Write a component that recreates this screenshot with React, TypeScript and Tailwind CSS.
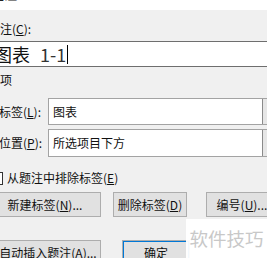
import React from "react";

const font = { fontFamily: '"Noto Sans CJK SC", "Noto Sans", sans-serif' };

function Btn({ children, cls }: { children: React.ReactNode; cls: string }) {
  return (
    <div
      className={`flex shrink-0 items-center justify-center border border-[#adadad] bg-[#e1e1e1] text-[12px] leading-[16px] text-[#111] whitespace-nowrap ${cls}`}
    >
      {children}
    </div>
  );
}

export default function App() {
  return (
    <div
      style={font}
      className="relative flex h-[258px] w-[267px] flex-col overflow-hidden bg-[#f0f0f0] text-[#111]"
    >
      {/* title strip */}
      <div className="h-[10px] shrink-0 overflow-hidden bg-white">
        <div className="-ml-[9px] -mt-[14px] text-[13px] font-bold leading-[16px] text-[#222]">
          题注
        </div>
      </div>

      {/* caption label */}
      <div className="mt-[11px] -ml-[12px] text-[12px] leading-[16px] whitespace-nowrap">
        题注(<span className="underline">C</span>):
      </div>

      {/* caption input */}
      <div className="mt-[4px] -ml-[10px] flex h-[26px] w-[290px] shrink-0 items-center border border-[#6e6e6e] bg-white pl-[4px]">
        <span className="-ml-[1px] text-[18px] leading-[22px] text-[#111]">图表</span>
        <span className="ml-[10px] text-[18px] leading-[22px] text-[#333]">1-1</span>
        <span className="ml-[1px] h-[19px] w-[1px] bg-black" />
      </div>

      {/* options label */}
      <div className="mt-[5px] -ml-[12px] text-[12px] leading-[16px] whitespace-nowrap">
        选项
      </div>

      {/* label select */}
      <div className="mt-[10px] flex h-[27px] shrink-0 items-center">
        <div className="w-[48px] shrink-0 -ml-[1px] text-[12px] leading-[16px] whitespace-nowrap">
          标签(<span className="underline">L</span>):
        </div>
        <div className="ml-[1px] flex h-full w-[240px] shrink-0 border border-[#a3a3a3]">
          <div className="flex w-[213px] items-center bg-white pl-[4px] text-[12px] leading-[16px]">
            图表
          </div>
          <div className="flex-1 border-l border-[#8a8a8a] bg-[#e6e6e6]" />
        </div>
      </div>

      {/* position select */}
      <div className="mt-[4px] flex h-[28px] shrink-0 items-center">
        <div className="w-[48px] shrink-0 -ml-[1px] text-[12px] leading-[16px] whitespace-nowrap">
          位置(<span className="underline">P</span>):
        </div>
        <div className="ml-[1px] flex h-full w-[240px] shrink-0 border border-[#a3a3a3]">
          <div className="flex w-[213px] items-center bg-white pl-[4px] text-[12px] leading-[16px]">
            所选项目下方
          </div>
          <div className="flex-1 border-l border-[#8a8a8a] bg-[#e6e6e6]" />
        </div>
      </div>

      {/* exclude label checkbox */}
      <div className="mt-[13px] flex items-center">
        <div className="-ml-[10px] h-[13px] w-[13px] shrink-0 border border-[#333] bg-white" />
        <div className="ml-[4px] text-[12px] leading-[16px] whitespace-nowrap">
          从题注中排除标签(<span className="underline">E</span>)
        </div>
      </div>

      {/* button row 1 */}
      <div className="mt-[6px] flex h-[25px] shrink-0">
        <Btn cls="-ml-[11px] w-[112px] h-full">
          新建标签(<span className="underline">N</span>)...
        </Btn>
        <Btn cls="ml-[12px] w-[74px] h-full">
          删除标签(<span className="underline">D</span>)
        </Btn>
        <Btn cls="ml-[19px] w-[72px] h-full">
          编号(<span className="underline">U</span>)...
        </Btn>
      </div>

      {/* button row 2 */}
      <div className="mt-[23px] flex h-[25px] shrink-0">
        <Btn cls="-ml-[5px] w-[106px] h-full">
          自动插入题注(<span className="underline">A</span>)...
        </Btn>
        <Btn cls="ml-[21px] w-[68px] h-full border-[#0078d7] outline outline-1 outline-[#0078d7] -outline-offset-2">
          确定
        </Btn>
      </div>

      {/* watermark */}
      <div className="absolute left-[186px] top-[219px] flex h-[39px] w-[81px] items-start justify-center bg-white/95 pt-[8px]">
        <span className="text-[18.5px] leading-[22px] text-[#c8c8c8] whitespace-nowrap">
          软件技巧
        </span>
      </div>
    </div>
  );
}
